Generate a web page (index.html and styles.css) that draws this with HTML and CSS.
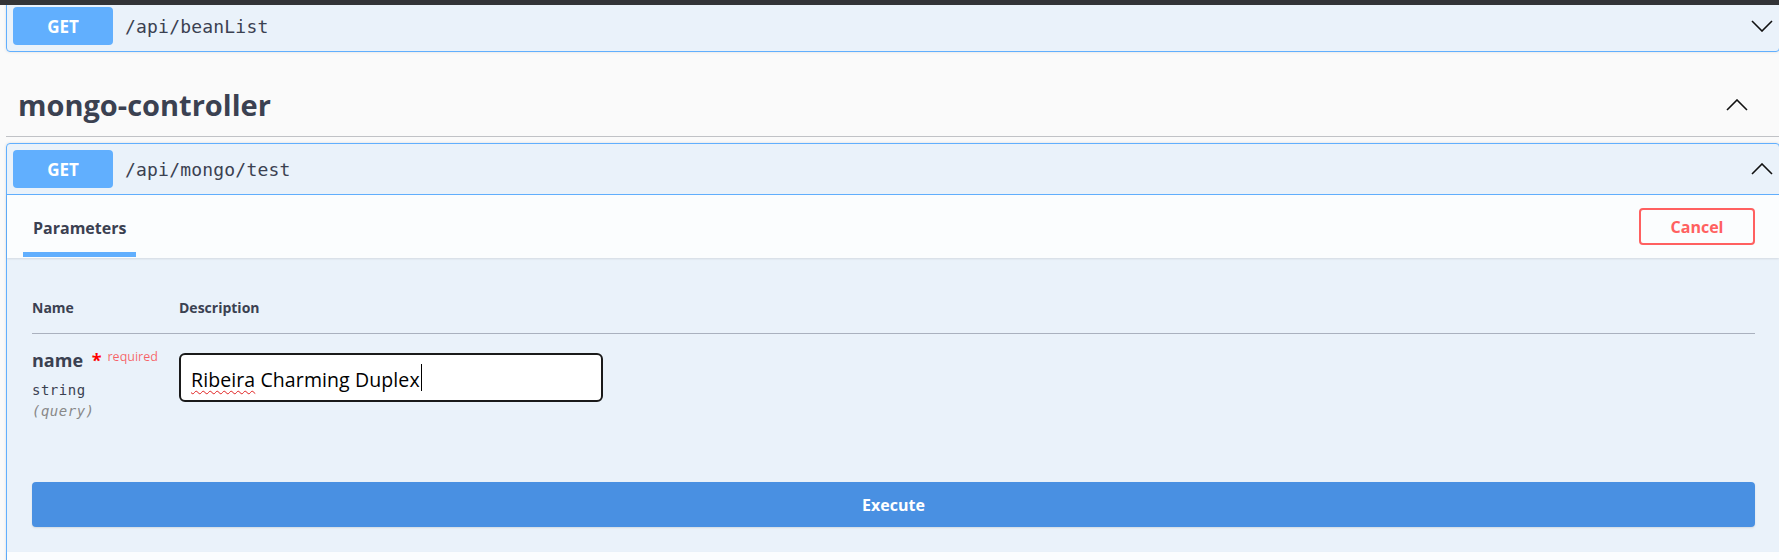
FILE: index.html
```html
<!DOCTYPE html>
<html lang="en">
<head>
<meta charset="utf-8">
<title>Swagger UI</title>
<link rel="stylesheet" href="styles.css">
</head>
<body>
<div class="topbar"></div>
<main class="page">
  <section class="tag-section">
    <div class="opblock">
      <div class="summary">
        <span class="method">GET</span>
        <span class="path">/api/beanList</span>
        <svg class="arrow" width="22" height="12" viewBox="0 0 22 12" aria-hidden="true"><polyline points="1,1 11,11 21,1" /></svg>
      </div>
    </div>
  </section>

  <section class="tag-section">
    <h4 class="tag-title">
      <span>mongo-controller</span>
      <svg class="arrow" width="22" height="12" viewBox="0 0 22 12" aria-hidden="true"><polyline points="1,11 11,1 21,11" /></svg>
    </h4>
    <div class="opblock is-open">
      <div class="summary">
        <span class="method">GET</span>
        <span class="path">/api/mongo/test</span>
        <svg class="arrow" width="22" height="12" viewBox="0 0 22 12" aria-hidden="true"><polyline points="1,11 11,1 21,11" /></svg>
      </div>
      <div class="opblock-body">
        <div class="section-header">
          <div class="tab">Parameters</div>
          <button class="btn-cancel" type="button">Cancel</button>
        </div>
        <div class="params">
          <table class="param-table">
            <thead>
              <tr>
                <th class="col-name">Name</th>
                <th>Description</th>
              </tr>
            </thead>
            <tbody>
              <tr>
                <td class="col-name">
                  <div class="param-name">name<span class="star">&nbsp;*</span><span class="req">required</span></div>
                  <div class="param-type">string</div>
                  <div class="param-in">(query)</div>
                </td>
                <td>
                  <div class="input" role="textbox"><span class="input-text"><span class="misspelled">Ribeira</span> Charming Duplex</span><span class="caret"></span></div>
                </td>
              </tr>
            </tbody>
          </table>
        </div>
        <div class="execute-wrapper">
          <button class="btn-execute" type="button">Execute</button>
        </div>
        <div class="section-header responses"></div>
      </div>
    </div>
  </section>
</main>
</body>
</html>
```

FILE: styles.css
```css
* { box-sizing: border-box; }

html, body {
  margin: 0;
  background: #fafafa;
  overflow: hidden;
}

body {
  width: 1779px;
  height: 560px;
  font-family: "Open Sans", "Noto Sans", sans-serif;
  color: #3b4151;
}

.topbar {
  position: fixed;
  top: 0;
  left: 0;
  right: 0;
  height: 5px;
  background: #333437;
  z-index: 2;
}

.page {
  padding-left: 6px;
  margin-right: -1px;
}

.tag-section:first-child .opblock {
  margin-bottom: 22px;
}

.opblock {
  border: 1px solid #61affe;
  border-radius: 4px;
  background: rgba(97, 175, 254, 0.1);
  box-shadow: 0 0 3px rgba(0, 0, 0, 0.12);
}

.summary {
  display: flex;
  align-items: center;
  padding: 6px;
}

.is-open .summary {
  border-bottom: 1px solid #61affe;
}

.method {
  width: 100px;
  height: 38px;
  display: flex;
  align-items: center;
  justify-content: center;
  background: #61affe;
  color: #fff;
  border-radius: 4px;
  font-weight: 700;
  font-size: 17px;
}

.path {
  margin-left: 12px;
  font-family: "DejaVu Sans Mono", monospace;
  font-size: 18px;
  letter-spacing: 0.2px;
  color: #3b4151;
}

.arrow {
  margin-left: auto;
  fill: none;
  stroke: #111;
  stroke-width: 1.6;
}

.tag-title {
  display: flex;
  align-items: center;
  margin: 0 0 6px;
  padding: 12px 32px 12px 12px;
  border-bottom: 1px solid rgba(59, 65, 81, 0.3);
  font-size: 29px;
  font-weight: 700;
  line-height: 38px;
  color: #3b4151;
}

.section-header {
  display: flex;
  align-items: center;
  justify-content: space-between;
  height: 63px;
  padding: 0 24px 0 16px;
  background: rgba(255, 255, 255, 0.8);
  box-shadow: 0 1px 2px rgba(0, 0, 0, 0.1);
}

.tab {
  align-self: stretch;
  display: flex;
  align-items: center;
  padding: 8px 10px 0;
  margin-bottom: 1px;
  border-bottom: 5px solid #61affe;
  font-size: 16px;
  font-weight: 700;
}

.btn-cancel {
  width: 116px;
  height: 37px;
  border: 2px solid #ff6060;
  border-radius: 4px;
  background: transparent;
  color: #ff6060;
  font-family: "Open Sans", sans-serif;
  font-size: 16px;
  font-weight: 700;
  padding: 0;
}

.params {
  padding: 26px 24px 0 25px;
}

.param-table {
  width: 100%;
  border-collapse: collapse;
}

.param-table th {
  text-align: left;
  font-size: 14px;
  font-weight: 700;
  line-height: 20px;
  padding: 14px 0 15px;
  border-bottom: 1px solid #aab1be;
}

.param-table .col-name {
  width: 147px;
}

.param-table td {
  vertical-align: top;
  padding: 14px 0;
}

.param-name {
  font-size: 18px;
  font-weight: 700;
  line-height: 24px;
  white-space: nowrap;
}

.star {
  margin-left: 4px;
  color: red;
}

.req {
  position: relative;
  top: -6px;
  padding-left: 6px;
  font-size: 12.5px;
  font-weight: 400;
  color: rgba(255, 0, 0, 0.6);
}

.param-type,
.param-in {
  font-family: "DejaVu Sans Mono", monospace;
  font-size: 14px;
  line-height: 21px;
  letter-spacing: 0.5px;
}

.param-type {
  padding-top: 5px;
}

.param-in {
  font-style: italic;
  color: #888;
}

.input {
  display: flex;
  align-items: center;
  width: 424px;
  height: 49px;
  margin-top: 5px;
  padding: 0 10px;
  border: 2px solid #1a1a1a;
  border-radius: 6px;
  background: #fff;
  font-size: 19.5px;
  letter-spacing: 0.1px;
  color: #000;
}

.input-text {
  margin-top: 4px;
  white-space: nowrap;
}

.misspelled {
  text-decoration: underline wavy #e02020;
  text-decoration-thickness: 1px;
  text-underline-offset: 3px;
}

.caret {
  width: 1px;
  height: 27px;
  margin-left: 1px;
  background: #000;
}

.execute-wrapper {
  padding: 46px 24px 25px 25px;
}

.btn-execute {
  display: block;
  width: 100%;
  height: 45px;
  border: none;
  border-radius: 4px;
  background: #4990e2;
  color: #fff;
  font-family: "Open Sans", sans-serif;
  font-size: 16px;
  font-weight: 700;
  box-shadow: 0 1px 2px rgba(0, 0, 0, 0.1);
}

.responses {
  height: 12px;
}
```
